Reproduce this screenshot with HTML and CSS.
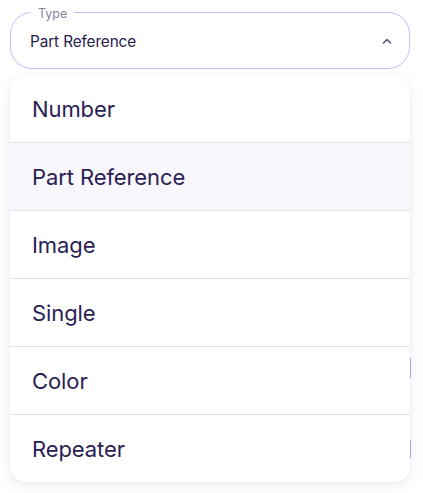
FILE: index.html
```html
<!DOCTYPE html>
<html>
<head>
<meta charset="utf-8">
<link rel="stylesheet" href="styles.css">
</head>
<body>
<div class="page">
  <fieldset class="select">
    <legend class="select-label">Type</legend>
    <div class="select-row">
      <span class="select-value">Part Reference</span>
      <svg class="chevron" width="12" height="8" viewBox="0 0 12 8"><path d="M2.5 6 L6 2.5 L9.5 6" fill="none" stroke="#57536b" stroke-width="1.5" stroke-linecap="round" stroke-linejoin="round"/></svg>
    </div>
  </fieldset>
  <div class="behind">
    <span class="peek peek-1"></span>
    <span class="peek peek-2"></span>
  </div>
  <ul class="menu">
    <li class="item">Number</li>
    <li class="item active">Part Reference</li>
    <li class="item">Image</li>
    <li class="item">Single</li>
    <li class="item">Color</li>
    <li class="item">Repeater</li>
  </ul>
</div>
</body>
</html>
```
FILE: styles.css
```css
* { box-sizing: border-box; }
html, body { margin: 0; padding: 0; background: #ffffff; }
body { font-family: Inter, "Noto Sans", sans-serif; color: #2a2153; }
.page { position: relative; width: 423px; height: 493px; padding: 4px 13px 0 10px; }
.select {
  margin: 0;
  height: 65px;
  border: 1px solid #c5bbfb;
  border-radius: 22px;
  padding: 0 16px 0 19px;
}
.select-label {
  font-size: 12.5px;
  color: #86829a;
  padding: 0 7px;
  margin-left: 1px;
  line-height: 16px;
  position: relative;
  top: 2px;
}
.select-row {
  display: flex;
  align-items: center;
  justify-content: space-between;
  height: 36px;
  margin-top: 3px;
}
.select-value { font-size: 15.3px; color: #27204d; letter-spacing: -0.1px; }
.chevron { margin-right: 0; margin-top: -1px; }
.behind { position: absolute; left: 0; top: 0; width: 423px; height: 493px; }
.peek { position: absolute; left: 409px; width: 2px; background: #b6a8fb; }
.peek-1 { top: 358px; height: 20px; }
.peek-2 { top: 440px; height: 18px; }
.menu {
  position: relative;
  list-style: none;
  margin: 6px 0 0 0;
  padding: 0;
  background: #ffffff;
  border-radius: 16px;
  overflow: hidden;
  box-shadow: 0 4px 14px rgba(40, 30, 90, 0.08), 0 0 4px rgba(40, 30, 90, 0.04);
}
.item {
  height: 68px;
  display: flex;
  align-items: center;
  padding-left: 22px;
  font-size: 22px;
  color: #2a2153;
  border-top: 1px solid #e3e0ee;
  letter-spacing: -0.1px;
}
.item:first-child { border-top: none; height: 67px; }
.item.active { background: #f8f7fe; }
```
